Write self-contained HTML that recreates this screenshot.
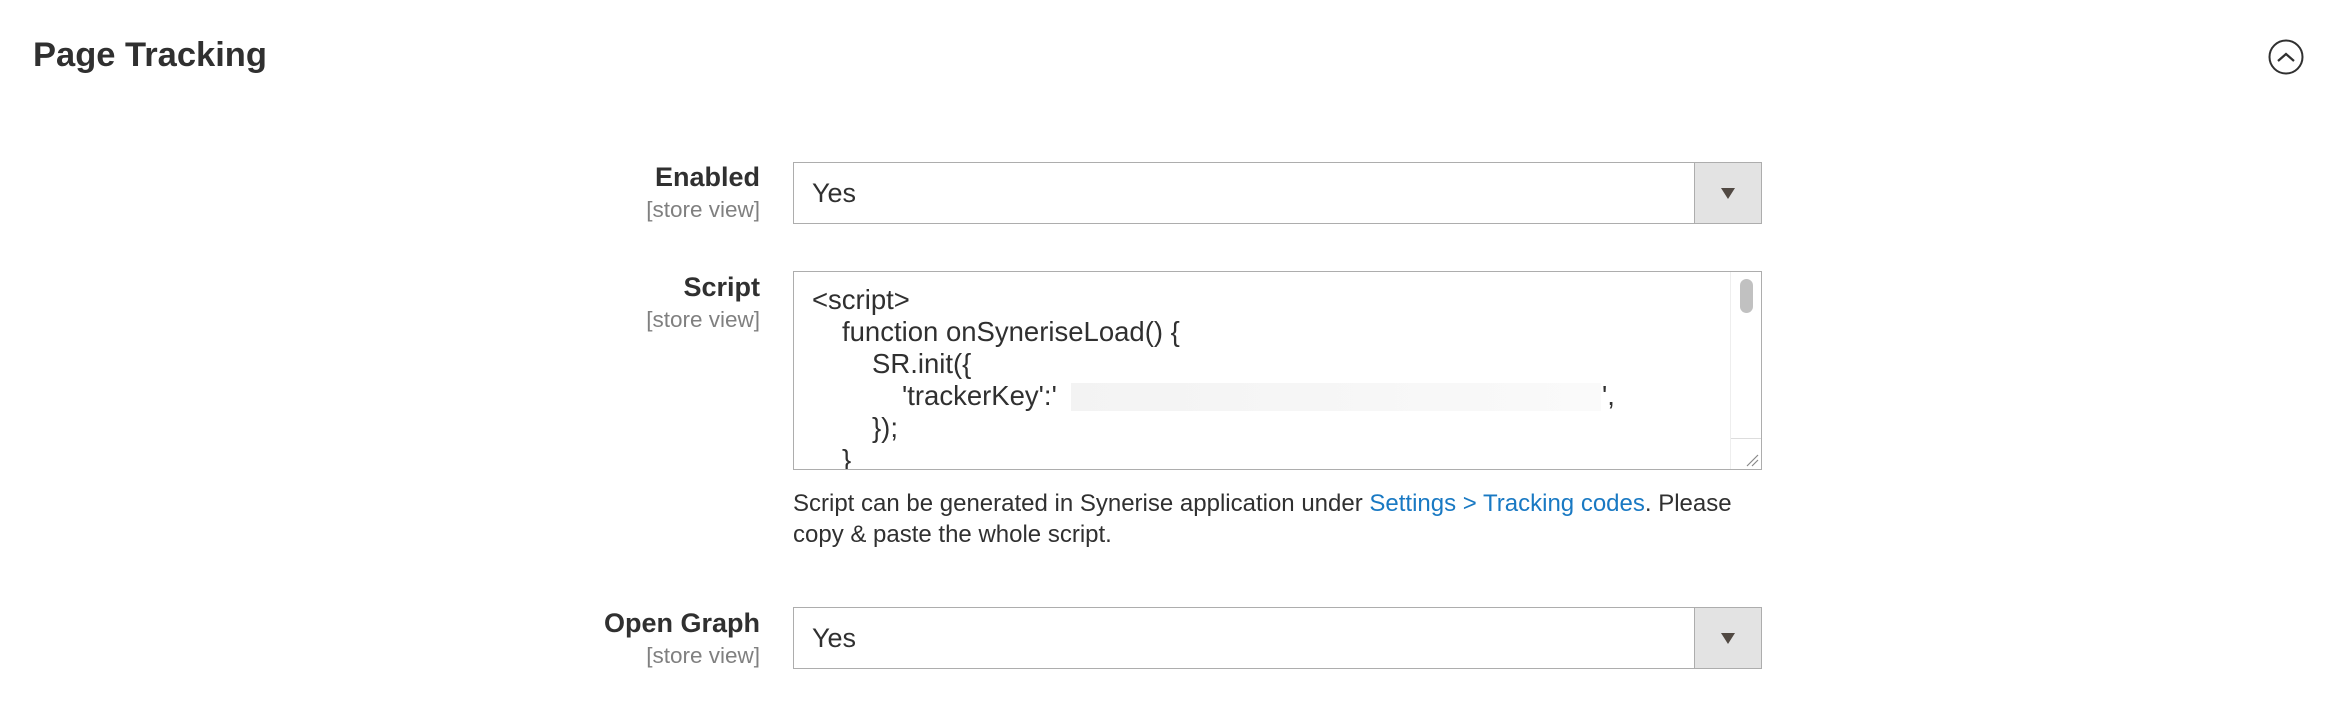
<!DOCTYPE html>
<html><head><meta charset="utf-8"><style>
body{margin:0;width:2346px;height:728px;background:#fff;font-family:"Liberation Sans",sans-serif;color:#303030;position:relative;overflow:hidden}
.a{position:absolute;white-space:nowrap}
.title{left:33px;top:36px;font-size:34.5px;font-weight:bold;color:#303030}
.lbl{right:1586px;text-align:right;font-size:27px;font-weight:bold;color:#303030}
.sv{right:1586px;text-align:right;font-size:22.5px;color:#808080}
.sel{left:793px;width:967px;height:60px;border:1px solid #adadad;background:#fff}
.sel .t{position:absolute;left:18px;top:15px;font-size:27px;color:#303030}
.sel .b{position:absolute;right:0;top:0;width:66px;height:60px;background:#e3e3e3;border-left:1px solid #adadad}
.sel .b:after{content:"";position:absolute;left:26px;top:25px;border-left:7px solid transparent;border-right:7px solid transparent;border-top:11px solid #514943}
.ta{left:793px;top:271px;width:967px;height:197px;border:1px solid #adadad;background:#fff;overflow:hidden}
.code{position:absolute;left:18px;font-size:27.5px;color:#303030}
.help{left:793px;font-size:24px;color:#303030}
.help span{color:#1979c3}
</style></head><body>
<div class="a title">Page Tracking</div>
<svg class="a" style="left:2267px;top:38px" width="38" height="38" viewBox="0 0 38 38"><circle cx="19" cy="19" r="16.5" fill="none" stroke="#303030" stroke-width="2"/><path d="M11 23 L19 16 L27 23" fill="none" stroke="#303030" stroke-width="2.2"/></svg>

<div class="a lbl" style="top:162px">Enabled</div>
<div class="a sv" style="top:197px">[store view]</div>
<div class="a sel" style="top:162px"><div class="t">Yes</div><div class="b"></div></div>

<div class="a lbl" style="top:272px">Script</div>
<div class="a sv" style="top:307px">[store view]</div>
<div class="a ta">
<div class="code" style="top:12px">&lt;script&gt;</div>
<div class="code" style="top:44px;left:48px">function onSyneriseLoad() {</div>
<div class="code" style="top:76px;left:78px">SR.init({</div>
<div class="code" style="top:108px;left:108px">'trackerKey':'</div>
<div style="position:absolute;left:277px;top:111px;width:530px;height:28px;background:linear-gradient(90deg,#f3f3f3,#fafafa)"></div>
<div class="code" style="top:108px;left:808px">',</div>
<div class="code" style="top:140px;left:78px">});</div>
<div class="code" style="top:172px;left:48px">}</div>
<div style="position:absolute;right:0;top:0;width:30px;height:197px;background:#fff;border-left:1px solid #eee"></div>
<div style="position:absolute;right:8px;top:7px;width:13px;height:34px;border-radius:7px;background:#c1c1c1"></div>
<div style="position:absolute;right:0;top:166px;width:30px;height:1px;background:#ddd"></div>
<svg style="position:absolute;right:2px;bottom:2px" width="16" height="16"><path d="M4 15 L15 4 M9 15 L15 9" stroke="#888" stroke-width="1.2"/></svg>
</div>

<div class="a help" style="top:490px">Script can be generated in Synerise application under <span>Settings &gt; Tracking codes</span>. Please</div>
<div class="a help" style="top:521px">copy &amp; paste the whole script.</div>

<div class="a lbl" style="top:608px">Open Graph</div>
<div class="a sv" style="top:643px">[store view]</div>
<div class="a sel" style="top:607px"><div class="t">Yes</div><div class="b"></div></div>
</body></html>
